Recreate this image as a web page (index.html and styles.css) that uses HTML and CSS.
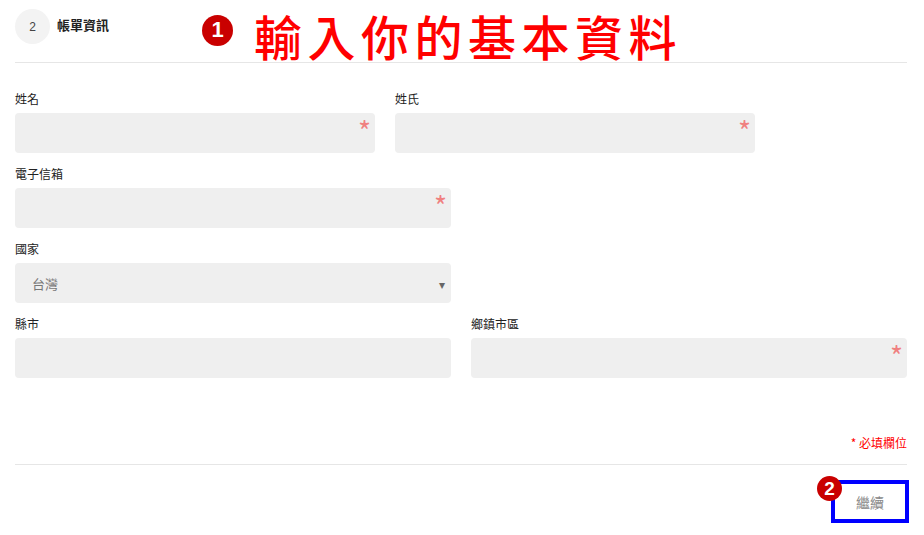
FILE: index.html
```html
<!DOCTYPE html>
<html lang="zh-Hant">
  <head>
    <meta charset="UTF-8" />
    <title>帳單資訊</title>
    <link rel="stylesheet" href="styles.css">
  </head>
  <body>
    <div class="page">
      <div class="header">
        <div class="step-num">2</div>
        <div class="step-title">帳單資訊</div>
        <div class="note-big">
          <span class="mark mark-lg">1</span>
          <span class="note-text">輸入你的基本資料</span>
        </div>
      </div>

      <form class="form">
        <div class="row row-names">
          <div class="field">
            <label>姓名</label>
            <div class="input"><span class="req">*</span></div>
          </div>
          <div class="field">
            <label>姓氏</label>
            <div class="input"><span class="req">*</span></div>
          </div>
        </div>
        <div class="row row-half">
          <div class="field">
            <label>電子信箱</label>
            <div class="input"><span class="req">*</span></div>
          </div>
        </div>
        <div class="row row-half">
          <div class="field">
            <label>國家</label>
            <div class="input select">
              <span class="value">台灣</span>
              <span class="arrow">&#9662;</span>
            </div>
          </div>
        </div>
        <div class="row row-two">
          <div class="field">
            <label>縣市</label>
            <div class="input"></div>
          </div>
          <div class="field">
            <label>鄉鎮市區</label>
            <div class="input"><span class="req">*</span></div>
          </div>
        </div>

        <p class="required">* 必填欄位</p>

        <div class="actions">
          <div class="btn-wrap">
            <span class="mark mark-sm">2</span>
            <button type="button" class="btn">繼續</button>
          </div>
        </div>
      </form>
    </div>
  </body>
</html>
```

FILE: styles.css
```css
* {
  margin: 0;
  padding: 0;
  box-sizing: border-box;
}
body {
  font-family: "Noto Sans CJK TC", "Liberation Sans", sans-serif;
  background: #fff;
  color: #222;
}

.page {
  width: 892px;
  margin-left: 15px;
}

.header {
  position: relative;
  display: flex;
  align-items: center;
  gap: 7px;
  padding: 9px 0 18px;
  border-bottom: 1px solid #e6e6e6;
}
.step-num {
  width: 35px;
  height: 35px;
  border-radius: 50%;
  background: #f3f3f3;
  display: flex;
  align-items: center;
  justify-content: center;
  font-family: "Liberation Sans", sans-serif;
  font-size: 12px;
  color: #444;
}
.step-title {
  font-size: 13px;
  font-weight: 700;
  color: #222;
  margin-top: -4px;
}

.note-big {
  position: absolute;
  left: 187px;
  top: 4px;
  display: flex;
  align-items: center;
  gap: 21px;
}
.mark {
  display: flex;
  align-items: center;
  justify-content: center;
  border-radius: 50%;
  background: #c90000;
  color: #fff;
  font-family: "Liberation Sans", sans-serif;
  font-weight: 700;
}
.mark-lg {
  width: 31px;
  height: 31px;
  font-size: 22px;
  margin-top: -10px;
}
.note-text {
  font-size: 48px;
  font-weight: 500;
  letter-spacing: 5.5px;
  color: #ff0000;
  line-height: 62px;
}

.form {
  padding-top: 28px;
}
.row {
  display: grid;
  gap: 20px;
  margin-bottom: 13px;
}
.row-names {
  grid-template-columns: 360px 360px;
}
.row-half {
  grid-template-columns: 436px;
}
.row-two {
  grid-template-columns: 436px 436px;
}
.field label {
  display: block;
  font-size: 12px;
  line-height: 16px;
  margin-bottom: 6px;
  color: #222;
}
.input {
  position: relative;
  height: 40px;
  border-radius: 4px;
  background: #efefef;
}
.req {
  position: absolute;
  right: 4px;
  top: 2px;
  font-size: 28px;
  line-height: 30px;
  color: #f08080;
}
.select {
  display: flex;
  align-items: center;
  justify-content: space-between;
  padding: 0 6px 0 17px;
}
.select .value {
  font-size: 13px;
  color: #777;
}
.select .arrow {
  font-size: 12px;
  color: #666;
}

.required {
  margin-top: 57px;
  text-align: right;
  font-size: 12px;
  line-height: 16px;
  color: #ff0000;
  padding-bottom: 13px;
  border-bottom: 1px solid #e6e6e6;
}

.actions {
  display: flex;
  justify-content: flex-end;
  padding-top: 15px;
  margin-right: -2px;
}
.btn-wrap {
  position: relative;
}
.btn {
  width: 78px;
  height: 43px;
  border: 4px solid #0000ff;
  background: #fff;
  font-family: "Noto Sans CJK TC", sans-serif;
  font-size: 14px;
  color: #888;
}
.mark-sm {
  position: absolute;
  left: -14px;
  top: -4px;
  width: 25px;
  height: 25px;
  font-size: 19px;
}
```
